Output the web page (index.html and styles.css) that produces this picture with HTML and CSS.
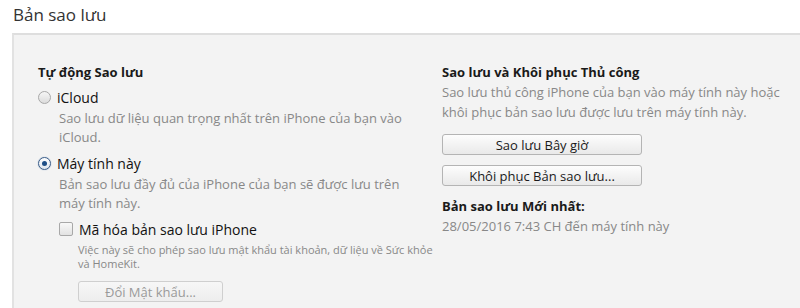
FILE: index.html
```html
<!DOCTYPE html>
<html lang="vi">
<head>
    <meta charset="UTF-8">
    <title>Bản sao lưu</title>
    <link rel="stylesheet" href="styles.css">
</head>
<body>
    <!-- tiêu đề -->
    <div class="title">Bản sao lưu</div>

    <div class="panel">
        <!-- cột trái -->
        <div class="col col-left">
            <div class="heading">Tự động Sao lưu</div>
            <div class="option">
                <span class="radio"></span>
                <span class="label">iCloud</span>
            </div>
            <div class="desc">Sao lưu dữ liệu quan trọng nhất trên iPhone của bạn vào<br>iCloud.</div>
            <div class="option">
                <span class="radio checked"></span>
                <span class="label">Máy tính này</span>
            </div>
            <div class="desc">Bản sao lưu đầy đủ của iPhone của bạn sẽ được lưu trên<br>máy tính này.</div>
            <div class="sub">
                <div class="option">
                    <span class="checkbox"></span>
                    <span class="label">Mã hóa bản sao lưu iPhone</span>
                </div>
                <div class="small">Việc này sẽ cho phép sao lưu mật khẩu tài khoản, dữ liệu về Sức khỏe<br>và HomeKit.</div>
                <button class="btn btn-disabled">Đổi Mật khẩu...</button>
            </div>
        </div>

        <!-- cột phải -->
        <div class="col col-right">
            <div class="heading">Sao lưu và Khôi phục Thủ công</div>
            <div class="desc flush">Sao lưu thủ công iPhone của bạn vào máy tính này hoặc<br>khôi phục bản sao lưu được lưu trên máy tính này.</div>
            <button class="btn">Sao lưu Bây giờ</button>
            <button class="btn">Khôi phục Bản sao lưu...</button>
            <div class="heading latest">Bản sao lưu Mới nhất:</div>
            <div class="desc flush date">28/05/2016 7:43 CH đến máy tính này</div>
        </div>
    </div>
</body>
</html>
```

FILE: styles.css
```css
body {
    margin: 0;
    height: 308px;
    background: #fff;
    font-family: 'Open Sans', 'Noto Sans', sans-serif;
    font-size: 13px;
    color: #222;
    overflow: hidden;
}
.title {
    font-size: 17px;
    color: #333;
    padding: 3px 0 0 13px;
    height: 30px;
}
.panel {
    box-sizing: border-box;
    height: 275px;
    margin-left: 12px;
    border-top: 2px solid #dedede;
    border-left: 2px solid #e2e2e2;
    background: #f3f3f3;
    display: flex;
    padding: 28px 0 0 24px;
    overflow: hidden;
}
.col-left {
    width: 404px;
    flex: none;
}
.col-right {
    flex: 1;
}
.heading {
    font-weight: bold;
    line-height: 18px;
    color: #1a1a1a;
}
.option {
    display: flex;
    align-items: center;
    gap: 6px;
    height: 20px;
    margin-top: 6px;
}
.label {
    font-size: 14px;
    color: #111;
}
.radio {
    width: 11px;
    height: 11px;
    border-radius: 50%;
    border: 1px solid #a8a8a8;
    background: linear-gradient(#f6f6f6, #dcdcdc);
    position: relative;
}
.radio.checked {
    border-color: #3d5f8a;
    background: linear-gradient(#fefefe, #dfe6ee);
    box-shadow: 0 0 1px #6d8fb8;
}
.radio.checked::after {
    content: "";
    position: absolute;
    left: 3px;
    top: 3px;
    width: 5px;
    height: 5px;
    border-radius: 50%;
    background: #1d4e86;
}
.desc {
    color: #888;
    line-height: 19px;
    padding-left: 21px;
    margin-top: 2px;
}
.desc.flush {
    padding-left: 0;
}
.col-right .heading + .desc {
    line-height: 20px;
    margin-top: 1px;
}
.col-right .date {
    margin-top: -2px;
}
.sub {
    padding-left: 21px;
    margin-top: 5px;
}
.checkbox {
    width: 12px;
    height: 12px;
    border: 1px solid #a8a8a8;
    border-radius: 2px;
    background: linear-gradient(#f8f8f8, #e2e2e2);
}
.small {
    font-size: 11px;
    color: #888;
    line-height: 14px;
    padding-left: 19px;
    margin-top: 4px;
}
.btn {
    display: block;
    font-family: inherit;
    font-size: 13px;
    color: #1a1a1a;
    width: 200px;
    height: 21px;
    padding: 0;
    border: 1px solid #b4b4b4;
    border-radius: 3px;
    background: linear-gradient(#fdfdfd, #e9e9e9);
    margin-top: 10px;
}
.col-left .btn {
    width: 145px;
    margin-left: 19px;
    margin-top: 10px;
    color: #9a9a9a;
    border-color: #cfcfcf;
    background: linear-gradient(#f7f7f7, #ededed);
}
.col-right .desc + .btn {
    margin-top: 12px;
}
.latest {
    margin-top: 11px;
}
```
